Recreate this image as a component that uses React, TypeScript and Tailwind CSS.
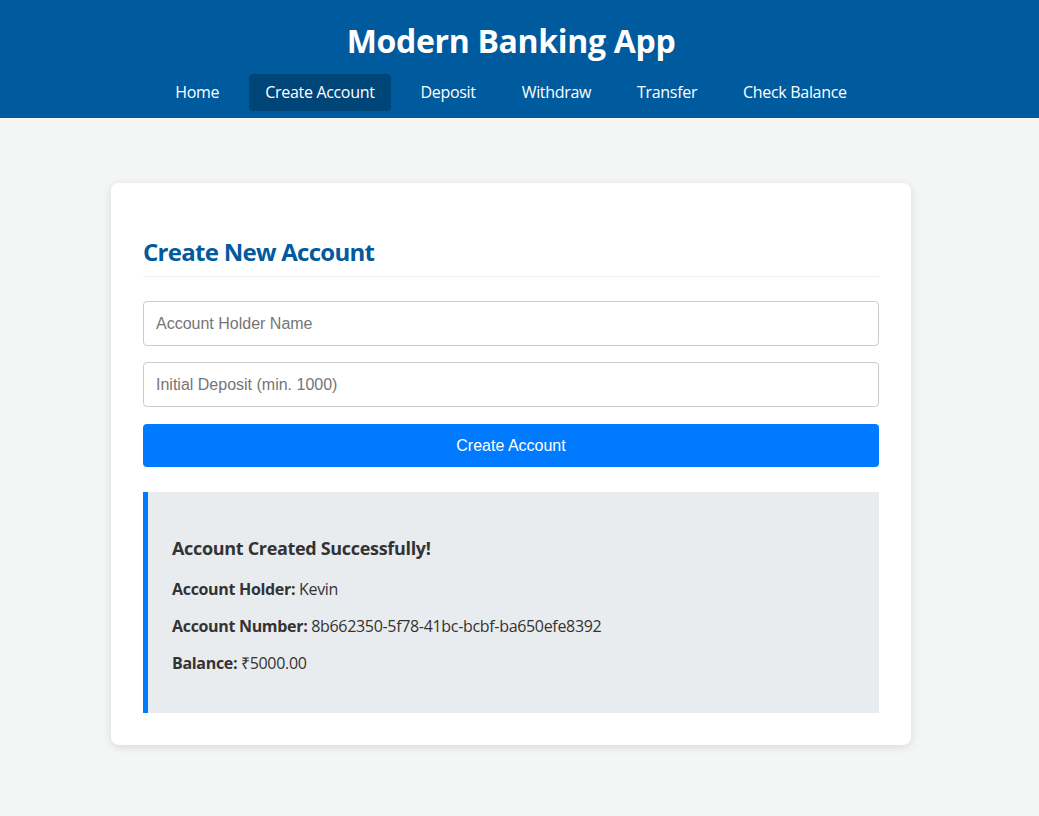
import { useState } from "react";

const navItems = ["Home", "Create Account", "Deposit", "Withdraw", "Transfer", "Check Balance"];

export default function App() {
  const [active, setActive] = useState("Create Account");

  return (
    <div className="min-h-[816px] bg-[#f4f5f5] font-['Open_Sans',sans-serif] tracking-[-0.02em] text-[#333]">
      <header className="h-[118px] bg-[#005a9e] pr-[17px] pt-[17px] text-white">
        <div className="flex flex-col items-center">
          <h1 className="text-[32px] font-bold leading-[48px]">Modern Banking App</h1>
          <nav className="mt-[9px] flex gap-[14px]">
            {navItems.map((item) => (
              <button
                key={item}
                onClick={() => setActive(item)}
                className={
                  "rounded px-4 py-2 text-base leading-[21px] " +
                  (active === item ? "bg-[#004578]" : "bg-transparent")
                }
              >
                {item}
              </button>
            ))}
          </nav>
        </div>
      </header>

      <main className="flex justify-center pr-[17px] pt-[65px]">
        <section className="w-[800px] rounded-lg bg-white px-8 pb-8 pt-[52px] shadow-[0_2px_8px_rgba(0,0,0,0.12)]">
          <h2 className="border-b border-[#eee] pb-[7px] text-2xl font-bold leading-[34px] tracking-[-0.03em] text-[#005a9e]">
            Create New Account
          </h2>

          <div className="mt-6 flex flex-col gap-4 tracking-normal">
            <input
              type="text"
              placeholder="Account Holder Name"
              className="h-[45px] w-full rounded border border-[#ccc] px-3 font-['Liberation_Sans',Arial,sans-serif] text-base placeholder:text-[#757575]"
            />
            <input
              type="number"
              placeholder="Initial Deposit (min. 1000)"
              className="h-[45px] w-full rounded border border-[#ccc] px-3 font-['Liberation_Sans',Arial,sans-serif] text-base placeholder:text-[#757575]"
            />
            <button className="mt-px h-[43px] w-full rounded bg-[#007bff] font-['Liberation_Sans',Arial,sans-serif] text-base text-white">
              Create Account
            </button>
          </div>

          <div className="mt-[25px] border-l-[5px] border-[#007bff] bg-[#e9ecef] pb-[39px] pl-6 pr-5 pt-[44px]">
            <h3 className="text-lg font-bold leading-[25px]">Account Created Successfully!</h3>
            <div className="mt-[18px] flex flex-col gap-4 text-base leading-[21px]">
              <p>
                <strong>Account Holder:</strong> Kevin
              </p>
              <p>
                <strong>Account Number:</strong> 8b662350-5f78-41bc-bcbf-ba650efe8392
              </p>
              <p>
                <strong>Balance:</strong> ₹5000.00
              </p>
            </div>
          </div>
        </section>
      </main>
    </div>
  );
}
